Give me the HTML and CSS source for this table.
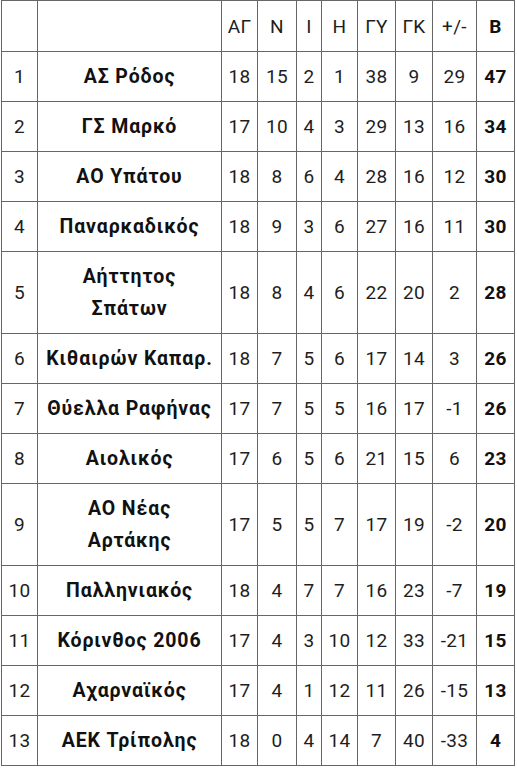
FILE: index.html
```html
<!DOCTYPE html>
<html lang="el">
<head>
<meta charset="utf-8">
<link rel="stylesheet" href="styles.css">
</head>
<body>
<table class="standings">
  <colgroup>
    <col class="c-rank"><col class="c-team"><col class="c-ag"><col class="c-n"><col class="c-i"><col class="c-h"><col class="c-gy"><col class="c-gk"><col class="c-diff"><col class="c-pts">
  </colgroup>
  <thead>
    <tr><th></th><th></th><th>ΑΓ</th><th>Ν</th><th>Ι</th><th>Η</th><th>ΓΥ</th><th>ΓΚ</th><th>+/-</th><th class="pts">Β</th></tr>
  </thead>
  <tbody>
    <tr><td>1</td><td class="team">ΑΣ Ρόδος</td><td>18</td><td>15</td><td>2</td><td>1</td><td>38</td><td>9</td><td>29</td><td class="pts">47</td></tr>
    <tr><td>2</td><td class="team">ΓΣ Μαρκό</td><td>17</td><td>10</td><td>4</td><td>3</td><td>29</td><td>13</td><td>16</td><td class="pts">34</td></tr>
    <tr><td>3</td><td class="team">ΑΟ Υπάτου</td><td>18</td><td>8</td><td>6</td><td>4</td><td>28</td><td>16</td><td>12</td><td class="pts">30</td></tr>
    <tr><td>4</td><td class="team">Παναρκαδικός</td><td>18</td><td>9</td><td>3</td><td>6</td><td>27</td><td>16</td><td>11</td><td class="pts">30</td></tr>
    <tr><td>5</td><td class="team">Αήττητος<br>Σπάτων</td><td>18</td><td>8</td><td>4</td><td>6</td><td>22</td><td>20</td><td>2</td><td class="pts">28</td></tr>
    <tr><td>6</td><td class="team">Κιθαιρών Καπαρ.</td><td>18</td><td>7</td><td>5</td><td>6</td><td>17</td><td>14</td><td>3</td><td class="pts">26</td></tr>
    <tr><td>7</td><td class="team">Θύελλα Ραφήνας</td><td>17</td><td>7</td><td>5</td><td>5</td><td>16</td><td>17</td><td>-1</td><td class="pts">26</td></tr>
    <tr><td>8</td><td class="team">Αιολικός</td><td>17</td><td>6</td><td>5</td><td>6</td><td>21</td><td>15</td><td>6</td><td class="pts">23</td></tr>
    <tr><td>9</td><td class="team">ΑΟ Νέας<br>Αρτάκης</td><td>17</td><td>5</td><td>5</td><td>7</td><td>17</td><td>19</td><td>-2</td><td class="pts">20</td></tr>
    <tr><td>10</td><td class="team">Παλληνιακός</td><td>18</td><td>4</td><td>7</td><td>7</td><td>16</td><td>23</td><td>-7</td><td class="pts">19</td></tr>
    <tr><td>11</td><td class="team">Κόρινθος 2006</td><td>17</td><td>4</td><td>3</td><td>10</td><td>12</td><td>33</td><td>-21</td><td class="pts">15</td></tr>
    <tr><td>12</td><td class="team">Αχαρναϊκός</td><td>17</td><td>4</td><td>1</td><td>12</td><td>11</td><td>26</td><td>-15</td><td class="pts">13</td></tr>
    <tr><td>13</td><td class="team">ΑΕΚ Τρίπολης</td><td>18</td><td>0</td><td>4</td><td>14</td><td>7</td><td>40</td><td>-33</td><td class="pts">4</td></tr>
  </tbody>
</table>
</body>
</html>
```
FILE: styles.css
```css
html, body {
  margin: 0;
  padding: 0;
  background: #fff;
}
body {
  padding-left: 1px;
  font-family: Roboto, "Noto Sans", sans-serif;
  color: #1e1e1e;
}
.standings {
  border-collapse: collapse;
  table-layout: fixed;
  width: 514px;
  font-size: 19px;
  letter-spacing: 0.3px;
  line-height: 32px;
}
.standings th,
.standings td {
  border: 1px solid #666;
  text-align: center;
  padding: 9px 0 8px;
  font-weight: 400;
  white-space: nowrap;
}
.standings thead th {
  height: 33px;
}
.standings td.team {
  font-size: 19.5px;
  letter-spacing: 0.9px;
  font-weight: 700;
  color: #111;
}
.standings .pts {
  font-weight: 700;
  color: #111;
}
.c-rank { width: 36px; }
.c-team { width: 184px; }
.c-ag { width: 36px; }
.c-n { width: 39px; }
.c-i { width: 25px; }
.c-h { width: 36px; }
.c-gy { width: 38px; }
.c-gk { width: 37px; }
.c-diff { width: 44px; }
.c-pts { width: 38px; }
```
